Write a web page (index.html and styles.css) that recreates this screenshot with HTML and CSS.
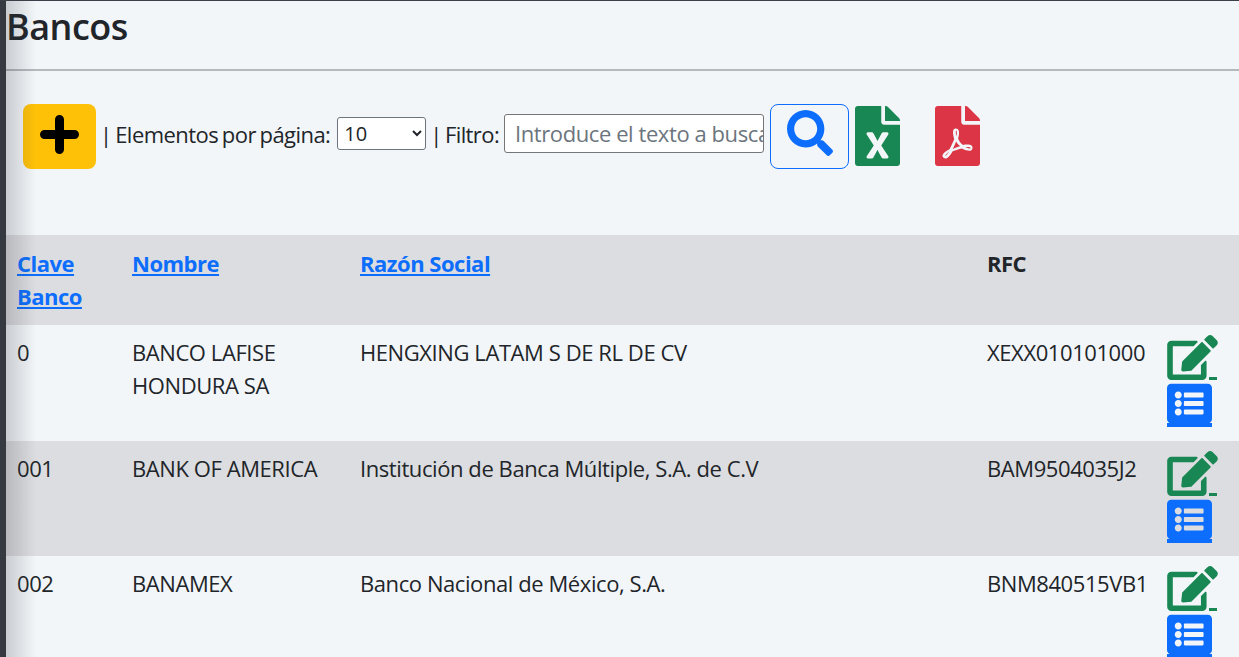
FILE: index.html
```html
<!DOCTYPE html>
<html lang="es">
<head>
<meta charset="utf-8">
<title>Bancos</title>
<link rel="stylesheet" href="styles.css">
</head>
<body>
<div class="rail"></div>
<main class="main">
  <h1 class="title">Bancos</h1>
  <hr class="rule">
  <div class="toolbar">
    <button class="btn-add" type="button" aria-label="Agregar">
      <svg class="ico-plus" viewBox="0 0 39 39"><path d="M19.5 4.5v30M4.500 19.500h30"/></svg>
    </button>
    <span class="lbl lbl-per">| Elementos por página:</span>
    <select class="sel"><option>10</option><option>25</option></select>
    <span class="lbl lbl-filter">| Filtro:</span>
    <input class="txt" type="text" placeholder="Introduce el texto a buscar">
    <button class="btn-search" type="button" aria-label="Buscar">
      <svg class="ico-search" viewBox="0 0 512 512"><path d="M505 442.700L405.300 343c-4.500-4.500-10.600-7-17-7H372c27.600-35.300 44-79.700 44-128C416 93.100 322.900 0 208 0S0 93.100 0 208s93.100 208 208 208c48.300 0 92.700-16.400 128-44v16.300c0 6.400 2.500 12.500 7 17l99.700 99.700c9.400 9.400 24.600 9.400 33.900 0l28.300-28.300c9.400-9.400 9.400-24.600.1-34zM208 336c-70.700 0-128-57.200-128-128 0-70.700 57.200-128 128-128 70.700 0 128 57.200 128 128 0 70.700-57.200 128-128 128z"/></svg>
    </button>
    <svg class="ico-file ico-xls" viewBox="0 0 384 512"><path d="M224 136V0H24C10.700 0 0 10.700 0 24v464c0 13.300 10.700 24 24 24h336c13.300 0 24-10.700 24-24V160H248c-13.200 0-24-10.800-24-24zm60.100 106.500L224 336l60.100 93.500c5.100 8-.6 18.500-10.100 18.500h-34.900c-4.400 0-8.500-2.400-10.600-6.300C208.900 405.500 192 373 192 373c-6.400 14.800-10 20-36.600 68.800-2.100 3.900-6.100 6.300-10.500 6.300H110c-9.500 0-15.200-10.500-10.100-18.500l60.300-93.500-60.300-93.500c-5.200-8 .6-18.500 10.100-18.500h34.800c4.400 0 8.500 2.400 10.600 6.300 26.100 48.800 20 33.600 36.600 68.500 0 0 6.100-11.700 36.600-68.500 2.100-3.900 6.200-6.300 10.600-6.300H274c9.500-.1 15.200 10.400 10.100 18.400zM384 121.900v6.100H256V0h6.100c6.400 0 12.500 2.500 17 7l97.900 98c4.500 4.500 7 10.600 7 16.900z"/></svg>
    <svg class="ico-file ico-pdf" viewBox="0 0 384 512"><path d="M181.900 256.100c-5-16-4.900-46.900-2-46.900 8.400 0 7.600 36.900 2 46.900zm-1.700 47.200c-7.700 20.200-17.300 43.300-28.400 62.700 18.300-7 39-17.200 62.900-21.900-12.700-9.600-24.900-23.400-34.500-40.800zM86.100 428.100c0 .8 13.200-5.400 34.900-40.200-6.700 6.300-29.100 24.500-34.900 40.200zM248 160h136v328c0 13.300-10.700 24-24 24H24c-13.300 0-24-10.700-24-24V24C0 10.700 10.700 0 24 0h200v136c0 13.200 10.800 24 24 24zm-8 171.800c-20-12.200-33.300-29-42.700-53.800 4.500-18.500 11.600-46.600 6.200-64.200-4.700-29.400-42.400-26.500-47.800-6.800-5 18.300-.4 44.100 8.100 77-11.600 27.600-28.700 64.600-40.800 85.800-.1 0-.1.1-.2.1-27.100 13.900-73.600 44.500-54.500 68 5.600 6.900 16 10 21.500 10 17.900 0 35.700-18 61.100-61.800 25.800-8.500 54.100-19.100 79-23.200 21.700 11.800 47.100 19.500 64 19.500 29.200 0 31.200-32 19.700-43.400-13.900-13.600-54.300-9.700-73.600-7.200zM377 105L279 7c-4.500-4.500-10.600-7-17-7h-6v128h128v-6.100c0-6.300-2.500-12.400-7-16.900zm-74.100 255.300c4.100-2.700-2.500-11.900-42.800-9 37.100 15.800 42.800 9 42.800 9z"/></svg>
  </div>
  <table class="grid">
    <colgroup>
      <col class="c1"><col class="c2"><col class="c3"><col class="c4"><col class="c5">
    </colgroup>
    <thead>
      <tr class="alt">
        <th><a href="#">Clave Banco</a></th>
        <th><a href="#">Nombre</a></th>
        <th><a href="#">Razón Social</a></th>
        <th>RFC</th>
        <th></th>
      </tr>
    </thead>
    <tbody>
      <tr>
        <td>0</td><td>BANCO LAFISE HONDURA SA</td><td>HENGXING LATAM S DE RL DE CV</td><td>XEXX010101000</td>
        <td class="acts">
          <a class="act act-edit" href="#"><svg class="ico-edit" viewBox="0 0 576 512"><use href="#edit"/></svg></a>
          <a class="act act-list" href="#"><svg class="ico-list" viewBox="0 0 512 512"><use href="#list"/></svg></a>
        </td>
      </tr>
      <tr class="alt">
        <td>001</td><td>BANK OF AMERICA</td><td>Institución de Banca Múltiple, S.A. de C.V</td><td>BAM9504035J2</td>
        <td class="acts">
          <a class="act act-edit" href="#"><svg class="ico-edit" viewBox="0 0 576 512"><use href="#edit"/></svg></a>
          <a class="act act-list" href="#"><svg class="ico-list" viewBox="0 0 512 512"><use href="#list"/></svg></a>
        </td>
      </tr>
      <tr>
        <td>002</td><td>BANAMEX</td><td>Banco Nacional de México, S.A.</td><td>BNM840515VB1</td>
        <td class="acts">
          <a class="act act-edit" href="#"><svg class="ico-edit" viewBox="0 0 576 512"><use href="#edit"/></svg></a>
          <a class="act act-list" href="#"><svg class="ico-list" viewBox="0 0 512 512"><use href="#list"/></svg></a>
        </td>
      </tr>
    </tbody>
  </table>
</main>
<svg class="defs" aria-hidden="true">
  <defs>
    <path id="edit" d="M402.600 83.200l90.200 90.200c3.800 3.800 3.800 10 0 13.800L274.400 405.600l-92.800 10.300c-12.400 1.400-22.900-9.100-21.500-21.500l10.300-92.800L388.800 83.200c3.800-3.800 10-3.800 13.800 0zm162-22.900l-48.800-48.800c-15.200-15.200-39.900-15.200-55.200 0l-35.400 35.400c-3.800 3.800-3.800 10 0 13.800l90.200 90.200c3.800 3.800 10 3.800 13.800 0l35.400-35.400c15.200-15.300 15.200-40 0-55.200zM384 346.200V448H64V128h229.800c3.200 0 6.200-1.300 8.500-3.500l40-40c7.600-7.600 2.200-20.500-8.500-20.500H48C21.500 64 0 85.500 0 112v352c0 26.500 21.500 48 48 48h352c26.500 0 48-21.500 48-48V306.200c0-10.700-12.900-16-20.500-8.500l-40 40c-2.200 2.300-3.500 5.300-3.500 8.500z"/>
    <path id="list" d="M464 480H48c-26.510 0-48-21.490-48-48V80c0-26.510 21.490-48 48-48h416c26.510 0 48 21.490 48 48v352c0 26.510-21.490 48-48 48zM128 120c-22.091 0-40 17.909-40 40s17.909 40 40 40 40-17.909 40-40-17.909-40-40-40zm0 96c-22.091 0-40 17.909-40 40s17.909 40 40 40 40-17.909 40-40-17.909-40-40-40zm0 96c-22.091 0-40 17.909-40 40s17.909 40 40 40 40-17.909 40-40-17.909-40-40-40zm288-136v-32c0-6.627-5.373-12-12-12H204c-6.627 0-12 5.373-12 12v32c0 6.627 5.373 12 12 12h200c6.627 0 12-5.373 12-12zm0 96v-32c0-6.627-5.373-12-12-12H204c-6.627 0-12 5.373-12 12v32c0 6.627 5.373 12 12 12h200c6.627 0 12-5.373 12-12zm0 96v-32c0-6.627-5.373-12-12-12H204c-6.627 0-12 5.373-12 12v32c0 6.627 5.373 12 12 12h200c6.627 0 12-5.373 12-12z"/>
  </defs>
</svg>
</body>
</html>
```
FILE: styles.css
```css
* { box-sizing: border-box; }
html, body { margin: 0; height: 100%; overflow: hidden; }
body {
  display: flex;
  background: #f3f6f9;
  color: #212529;
  font-family: "Open Sans", "Noto Sans", sans-serif;
  font-size: 22px;
  line-height: 33px;
  border-top: 1px solid #3a4048;
}
.rail { width: 6px; flex: none; background: #343a40; }
.main { flex: 1; min-width: 0; position: relative; }
.main::before {
  content: "";
  position: absolute;
  left: 0; top: 0; bottom: 0;
  width: 30px;
  background: linear-gradient(90deg, rgba(52,58,64,.22), rgba(52,58,64,0));
  pointer-events: none;
}
.title { margin: 0; padding: 6px 0 0; font-size: 36px; font-weight: 600; line-height: 40px; height: 68px; letter-spacing: -.5px; }
.rule { margin: 0; border: 0; height: 2px; background: #b6b9bc; }
.toolbar { display: flex; align-items: center; height: 65px; margin: 33px 0 66px; padding-left: 17px; }
.btn-add { width: 73px; height: 65px; border: 0; border-radius: 8px; background: #ffc107; padding: 0 0 4px; display: flex; align-items: center; justify-content: center; }
.ico-plus { width: 39px; height: 39px; fill: none; stroke: #000; stroke-width: 9; stroke-linecap: round; }
.lbl { white-space: nowrap; letter-spacing: -.55px; word-spacing: -1.5px; margin-bottom: 5px; }
.lbl-per { margin-left: 4px; }
.sel { margin: 0 0 7px 7px; width: 89px; height: 33px; font: inherit; font-size: 20px; color: #212529; background: #fff; border: 1px solid #6c757d; border-radius: 3px; padding: 0 0 0 2px; }
.lbl-filter { margin-left: 4px; letter-spacing: -.6px; word-spacing: -2px; }
.txt { margin: 0 0 7px 5px; width: 260px; height: 39px; font: inherit; font-size: 22px; letter-spacing: -.42px; background: #fff; border: 1px solid #767676; border-radius: 3px; padding: 0 0 0 10px; color: #212529; }
.txt::placeholder { color: #6c757d; opacity: 1; }
.btn-search { margin-left: 6px; width: 79px; height: 65px; background: transparent; border: 1px solid #0d6efd; border-radius: 8px; padding: 0 0 8px; display: flex; align-items: center; justify-content: center; }
.ico-search { width: 46px; height: 46px; fill: #0d6efd; }
.ico-file { width: 45px; height: 60px; flex: none; align-self: flex-start; margin-top: 2px; }
.ico-xls { margin-left: 6px; fill: #198754; }
.ico-pdf { margin-left: 35px; fill: #dc3545; }
.grid { width: 1233px; table-layout: fixed; border-collapse: collapse; }
.c1 { width: 115px; } .c2 { width: 228px; } .c3 { width: 627px; } .c4 { width: 180px; } .c5 { width: 83px; }
.grid th, .grid td { padding: 11px 11px 10px; text-align: left; vertical-align: top; letter-spacing: -.42px; }
.grid th { font-weight: 700; padding: 12px 11px; letter-spacing: -.5px; }
.grid a { color: #0d6efd; }
.alt { background: #dcdde0; }
.grid .acts { padding: 10px 0 13.5px 11px; letter-spacing: 0; line-height: 0; }
.act { display: block; background-repeat: no-repeat; }
.act-edit { width: 50px; height: 45px; margin-bottom: 1px; background-image: linear-gradient(#198754, #198754); background-size: 8px 3px; background-position: right bottom; }
.act-list { width: 45px; height: 46px; background-image: linear-gradient(#0d6efd, #0d6efd); background-size: 100% 4px; background-position: left bottom; }
.ico-edit { display: block; width: 51px; height: 45px; fill: #198754; }
.ico-list { display: block; width: 45px; height: 45px; fill: #0d6efd; }
.defs { width: 0; height: 0; position: absolute; }
```
